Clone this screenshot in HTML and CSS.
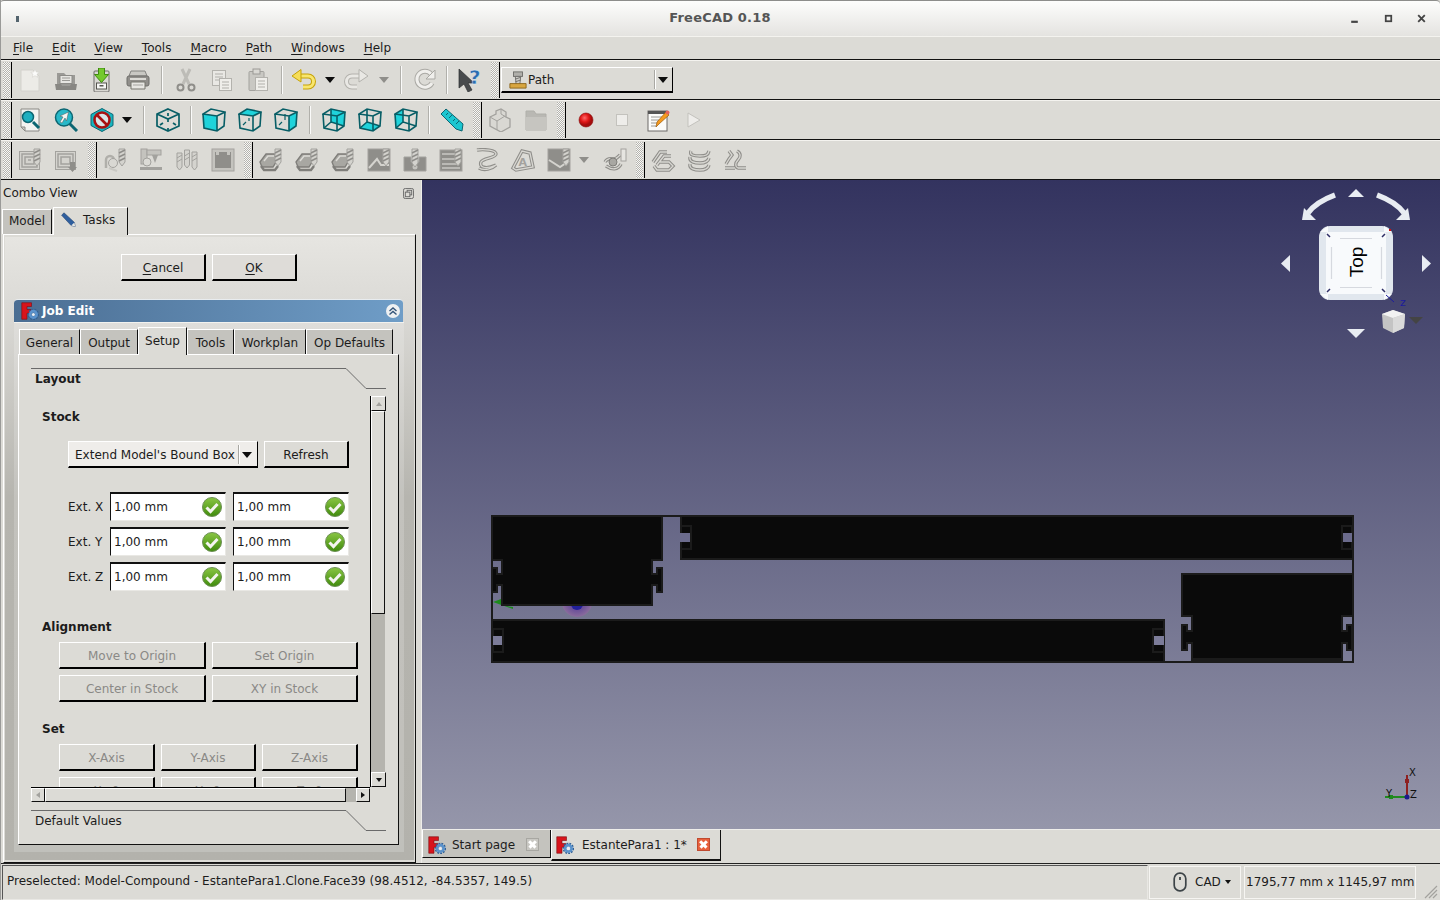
FILE: index.html
```html
<!DOCTYPE html>
<html lang="en">
<head>
<meta charset="utf-8">
<title>FreeCAD 0.18</title>
<link rel="stylesheet" href="styles.css">
</head>
<body>
<svg class="defs" aria-hidden="true">
<defs>
<linearGradient id="gc" x1="0" y1="0" x2="0" y2="1"><stop offset="0" stop-color="#8ac644"/><stop offset="1" stop-color="#3f8a0c"/></linearGradient>
<radialGradient id="gr" cx=".4" cy=".35"><stop offset="0" stop-color="#ff6a6a"/><stop offset=".6" stop-color="#e01616"/><stop offset="1" stop-color="#a50c0c"/></radialGradient>
<radialGradient id="gorg"><stop offset="0" stop-color="#52369a"/><stop offset=".6" stop-color="#70549a"/><stop offset="1" stop-color="#8a6c9c"/></radialGradient>
<path id="p-helix" d="M2 2c7-1 19 0 19 4s-13 4-15 8c-2 5 4 8 15 3M4 20c5 3 13 1 17-3"/>
<path id="p-engr" d="M2 20L11 3l8 2 3 14-17 3z"/>
<path id="p-comp" d="M2 14L9 4h7M6 17l7-9h7M3 18l3 4h12l4-4-4-4H9"/>
<path id="p-lay" d="M4 3c-2 4 3 5 9 5s8-1 9-5M3 9c-1 5 5 6 10 6s8-1 9-5M3 16c-1 5 5 6 10 6s8-1 9-5"/>
<path id="p-sim" d="M14 3c4 2 4 6 1 9s-3 7 0 8h8M6 3l3 4-3 4-3 5M2 20h10"/>
<path id="p-dress" d="M2 14c3-5 7-3 9-3s3-1 6-4M3 18c6 4 12 4 15-2"/>
<symbol id="bit" viewBox="0 0 24 24"><path d="M16 1h6v13l-3 4-3-4z" fill="#d4d3ce" stroke="#a3a29e"/><path d="M16 5l6-3M16 9l6-3M16 13l6-3" stroke="#8f8e8a" stroke-width="1.600" fill="none"/></symbol>
<symbol id="new" viewBox="0 0 24 24"><path d="M3 2h12l6 6v15H3z" fill="#ecebe7" stroke="#d3d2cd"/><path d="M17 1l1.300 3 3 .3-2.300 2 .7 3-2.700-1.600-2.700 1.600.7-3-2.300-2 3-.3z" fill="#fbfbfa" stroke="#d5d4cf" stroke-width=".6"/></symbol>
<symbol id="open" viewBox="0 0 24 24"><path d="M3 5h7l2 2h9v11H3z" fill="#9b9a96"/><rect x="6" y="7.500" width="12" height="8" fill="#e6e5e1" stroke="#8c8b87"/><path d="M8 10h8M8 12.500h8" stroke="#9b9a96"/><path d="M1 16h6l1 2h8l1-2h6l-1 6H2z" fill="#888783"/></symbol>
<symbol id="save" viewBox="0 0 24 24"><rect x="4" y="3" width="15" height="21" rx="1" fill="#d9d8d3" stroke="#6c6b68"/><rect x="6.500" y="15" width="10" height="6" fill="#f6f6f4" stroke="#55544f"/><rect x="9.500" y="17" width="4" height="1.500" fill="#55544f"/><path d="M8.500 0h6v6.500h4l-7 8-7-8h4z" fill="#74c92e" stroke="#3f8a10"/></symbol>
<symbol id="print" viewBox="0 0 24 24"><path d="M5 3h14l2 5H3z" fill="#c9c8c3" stroke="#848380"/><rect x="1" y="8" width="22" height="10" rx="2" fill="#918f8b" stroke="#6f6e6a"/><rect x="4" y="10" width="16" height="2" fill="#dcdbd6"/><path d="M5 14h14v7H5z" fill="#e7e6e2" stroke="#77766f"/><path d="M7 17h10" stroke="#a5a4a0"/></symbol>
<symbol id="cut" viewBox="0 0 24 24"><path d="M9 16L16 1M15 16L8 1" stroke="#bdbcb7" stroke-width="3" fill="none"/><circle cx="6.500" cy="19.500" r="3" fill="none" stroke="#8f8e8a" stroke-width="2"/><circle cx="17.500" cy="19.500" r="3" fill="none" stroke="#8f8e8a" stroke-width="2"/></symbol>
<symbol id="copy" viewBox="0 0 24 24"><rect x="2.500" y="2.500" width="13" height="15" fill="#e9e8e4" stroke="#b3b2ad"/><path d="M5 6h8M5 9h8M5 12h5" stroke="#b0afaa"/><rect x="9.500" y="10.500" width="12" height="12" fill="#efeeea" stroke="#b3b2ad"/><path d="M12 14h7M12 17h7M12 20h7" stroke="#b0afaa"/></symbol>
<symbol id="paste" viewBox="0 0 24 24"><rect x="3" y="3.500" width="15" height="19" rx="1" fill="#c9c8c3" stroke="#a3a29e"/><rect x="7" y="1" width="7" height="5" fill="#d9d8d3" stroke="#9b9a96"/><rect x="9.500" y="9.500" width="12" height="13" fill="#efeeea" stroke="#b3b2ad"/><path d="M12 13h7M12 16h7M12 19h7" stroke="#b0afaa"/></symbol>
<symbol id="undo" viewBox="0 0 24 24"><path d="M9 8h8a5.500 5.500 0 0 1 0 11h-5" fill="none" stroke="#c6a208" stroke-width="5"/><path d="M9 8h8a5.500 5.500 0 0 1 0 11h-5" fill="none" stroke="#f8e66e" stroke-width="3"/><path d="M1 8l9-6.500V14z" fill="#f6de58" stroke="#c6a208"/></symbol>
<symbol id="redo" viewBox="0 0 24 24"><path d="M15 8H7a5.500 5.500 0 0 0 0 11h5" fill="none" stroke="#b3b2ad" stroke-width="5"/><path d="M15 8H7a5.500 5.500 0 0 0 0 11h5" fill="none" stroke="#e9e8e4" stroke-width="3"/><path d="M23 8l-9-6.500V14z" fill="#e9e8e4" stroke="#b3b2ad"/></symbol>
<symbol id="refresh" viewBox="0 0 24 24"><path d="M19 15a8 8 0 1 1-1-9" fill="none" stroke="#aaa9a4" stroke-width="5"/><path d="M19 15a8 8 0 1 1-1-9" fill="none" stroke="#f0efec" stroke-width="3"/><path d="M22 2v9h-9z" fill="#f0efec" stroke="#aaa9a4"/></symbol>
<symbol id="help" viewBox="0 0 24 24"><path d="M1 1v19l5-4 4 8 4-2-4-7h6z" fill="#484b4d" stroke="#2f3132" stroke-width=".7"/><text x="11" y="16" class="ictext qm">?</text></symbol>
<symbol id="fitall" viewBox="0 0 24 24"><path d="M3 1h18v22H7l-4-4z" fill="#f3f3f1" stroke="#8a8985"/><path d="M3 19h4v4z" fill="#cfcec9" stroke="#8a8985"/><path d="M15 14l6 6" stroke="#0c6672" stroke-width="3"/><circle cx="10" cy="9" r="5.500" fill="#20afc0" stroke="#0c6672" stroke-width="1.500"/></symbol>
<symbol id="fitsel" viewBox="0 0 24 24"><path d="M15 15l8 8" stroke="#0c6672" stroke-width="3"/><circle cx="10" cy="9.500" r="8.500" fill="#28b8c8" stroke="#0c6672" stroke-width="1.500"/><path d="M14.500 4L6 8l3 1-3 5 2 1 3-5 1.500 3z" fill="#f4f4f2" stroke="#555" stroke-width=".5"/></symbol>
<symbol id="style" viewBox="0 0 24 24"><path d="M12 .5l11 6v11l-11 6-11-6v-11z" fill="#17b5c0" stroke="#0c6672"/><circle cx="12" cy="12" r="7.500" fill="#d9e6e8" stroke="#a81212" stroke-width="2.600"/><path d="M7 7l10 10" stroke="#a81212" stroke-width="2.600"/></symbol>
<symbol id="wire" viewBox="0 0 24 24"><path d="M1 6l14 2 8-4-14-3zM1 6l1 14 13 3 7-5 1-14M15 8v15" fill="none" stroke="#075e66" stroke-width="1.600"/></symbol>
<symbol id="wireb" viewBox="0 0 24 24"><path d="M9 1v13l13 4M9 14l-7 6" fill="none" stroke="#075e66" stroke-width="1.600"/></symbol>
<symbol id="axo" viewBox="0 0 24 24"><path d="M12 1l11 5v12l-11 5-11-5V6zM1 6l11 5 11-5M12 11v3M12 20v3" fill="none" stroke="#075e66" stroke-width="1.700"/><path d="M4 17l3-2M20 17l-3-2M12 8V5" stroke="#075e66" stroke-width="1.700"/></symbol>
<symbol id="vfront" viewBox="0 0 24 24"><path d="M1 6l14 2v15l-13-3z" fill="#1fd3db"/><use href="#wire"/></symbol>
<symbol id="vtop" viewBox="0 0 24 24"><path d="M1 6l14 2 8-4-14-3z" fill="#1fd3db"/><use href="#wire"/><path d="M5 17l3-3M11 10V13" stroke="#075e66" stroke-width="1.200"/></symbol>
<symbol id="vright" viewBox="0 0 24 24"><path d="M15 8l8-4-1 14-7 5z" fill="#1fd3db"/><use href="#wire"/><path d="M5 17l3-3M11 6v6" stroke="#075e66" stroke-width="1.200"/></symbol>
<symbol id="vrear" viewBox="0 0 24 24"><path d="M9 1l14 3-1 14-13-4z" fill="#1fd3db"/><use href="#wire"/><use href="#wireb"/></symbol>
<symbol id="vbot" viewBox="0 0 24 24"><path d="M9 14l13 4-7 5-13-3z" fill="#1fd3db"/><use href="#wire"/><use href="#wireb"/></symbol>
<symbol id="vleft" viewBox="0 0 24 24"><path d="M1 6l8-5v13l-7 6z" fill="#1fd3db"/><use href="#wire"/><use href="#wireb"/></symbol>
<symbol id="rule" viewBox="0 0 24 24"><path d="M1 6l5-5 17 15-1 7-6-2z" fill="#1cc6d0" stroke="#0c6672"/><path d="M6 7l2-2M9 10l3-3M13 13l2-2M16 16l3-3" stroke="#0c6672"/></symbol>
<symbol id="part" viewBox="0 0 24 24"><path d="M2 9l6-3V3l5-2 5 3v5l4 2v8l-9 5-11-6z" fill="#d9d8d3" stroke="#a3a29e" stroke-width="1.300"/><path d="M2 9l7 4 8-5M9 13v9M13 1v5l5 3" fill="none" stroke="#a3a29e"/></symbol>
<symbol id="fold" viewBox="0 0 24 24"><path d="M2 3h8l2 3h10v16H2z" fill="#b9b8b3" stroke="#b0afaa"/><path d="M2 9h20v13H2z" fill="#c6c5c0"/></symbol>
<symbol id="rec" viewBox="0 0 24 24"><circle cx="12" cy="12" r="7" fill="url(#gr)" stroke="#8a0c0c" stroke-width=".6"/></symbol>
<symbol id="stop" viewBox="0 0 24 24"><rect x="6.500" y="6.500" width="11" height="11" fill="#eeedea" stroke="#c3c2bd"/></symbol>
<symbol id="macro" viewBox="0 0 24 24"><rect x="2" y="3" width="19" height="20" fill="#fbfbf9" stroke="#6c6b68"/><path d="M2 3h19v3H2z" fill="#555"/><path d="M5 9h11M5 12h8M5 15h6M5 18h5" stroke="#9a9a96"/><path d="M10 19l1-5L20 4l3 3-10 9z" fill="#f59b1f" stroke="#9b5a0c" stroke-width=".7"/><circle cx="21.500" cy="4.500" r="2" fill="#e4635c"/></symbol>
<symbol id="play" viewBox="0 0 24 24"><path d="M6 5l12 7-12 7z" fill="#eeedea" stroke="#c3c2bd"/></symbol>
<symbol id="contour" viewBox="0 0 24 24"><rect x="1.500" y="3.500" width="20" height="18" fill="#d4d3ce" stroke="#a3a29e"/><path d="M4 6h15v13H4zM7 9h9v7H7zM10 12h3" fill="none" stroke="#a3a29e" stroke-width="1.500"/><use href="#bit"/></symbol>
<symbol id="contour2" viewBox="0 0 24 24"><rect x="1.500" y="3.500" width="20" height="18" fill="#d4d3ce" stroke="#a3a29e"/><path d="M4 6h15v13H4zM7 9h9v7H7z" fill="none" stroke="#a3a29e" stroke-width="1.500"/><path d="M16 14h5v5h2l-4.500 5-4.500-5h2z" fill="#8f8e8a"/></symbol>
<symbol id="pin" viewBox="0 0 24 24"><path d="M3 20v-8a4 4 0 0 1 8 0" fill="none" stroke="#b0afaa" stroke-width="2.500"/><circle cx="10" cy="15" r="4.500" fill="#d9d8d3" stroke="#a3a29e"/><path d="M6 20l8 3" stroke="#c9c8c3" stroke-width="2"/><use href="#bit"/></symbol>
<symbol id="mach" viewBox="0 0 24 24"><rect x="2" y="1" width="6" height="15" fill="#c4c3be" stroke="#a3a29e"/><rect x="8" y="2" width="14" height="5" fill="#c4c3be" stroke="#a3a29e"/><path d="M13 7h6l-3 8z" fill="#a3a29e"/><circle cx="8" cy="14" r="4" fill="#dcdbd6" stroke="#a3a29e"/><rect x="1" y="19" width="22" height="3" fill="#a3a29e"/></symbol>
<symbol id="bits" viewBox="0 0 24 24"><g fill="#d4d3ce" stroke="#a3a29e"><path d="M2 5h5v14l-2.500 3L2 19z"/><path d="M9.500 2h5v15l-2.500 3-2.500-3z"/><path d="M17 4h5v15l-2.500 3-2.500-3z"/></g><path d="M2 10l5-3M2 14l5-3M9.500 8l5-3M9.500 12l5-3M17 9l5-3M17 13l5-3" stroke="#a3a29e" fill="none"/></symbol>
<symbol id="stock" viewBox="0 0 24 24"><rect x="1" y="1" width="22" height="22" fill="#c4c3be" stroke="#a3a29e"/><rect x="4" y="4" width="16" height="16" fill="#8f8e8a"/><rect x="5" y="4" width="3" height="3" fill="#c4c3be"/><rect x="16" y="4" width="3" height="3" fill="#c4c3be"/></symbol>
<symbol id="stack" viewBox="0 0 24 24"><path d="M1 14l6-8h10v8l-3 5H3z" fill="#a8a7a2" stroke="#7f7e7a" stroke-width="1.300"/><path d="M2 18l3 4h11l3-4" fill="none" stroke="#7f7e7a" stroke-width="2.400"/><path d="M5 13l4-5h6" fill="none" stroke="#dcdbd6" stroke-width="1.500"/><use href="#bit"/></symbol>
<symbol id="pocket" viewBox="0 0 24 24"><rect x="1" y="1" width="22" height="22" fill="#8f8e8a" stroke="#a3a29e"/><path d="M2 20l8-9 4 6h8" fill="none" stroke="#d4d3ce" stroke-width="2"/><use href="#bit"/></symbol>
<symbol id="drill" viewBox="0 0 24 24"><path d="M1 9h7v5h8V9h7v14H1z" fill="#8f8e8a" stroke="#a3a29e"/><circle cx="12" cy="19" r="2.500" fill="#c4c3be"/><path d="M9 1h6v14l-3 4-3-4z" fill="#d4d3ce" stroke="#a3a29e"/><path d="M9 5l6-3M9 9l6-3M9 13l6-3" stroke="#8f8e8a" stroke-width="1.500"/></symbol>
<symbol id="face" viewBox="0 0 24 24"><rect x="1" y="2" width="22" height="21" fill="#8f8e8a" stroke="#a3a29e"/><path d="M3 6h15M3 11h15M3 16h15M3 20h18" stroke="#c9c8c3" stroke-width="1.500"/><use href="#bit"/></symbol>
<symbol id="helix" viewBox="0 0 24 24"><use href="#p-helix" class="t1"/><use href="#p-helix" class="t2"/></symbol>
<symbol id="engr" viewBox="0 0 24 24"><use href="#p-engr" class="t1"/><use href="#p-engr" class="t2"/><text x="7.500" y="18" class="ictext eng">A</text></symbol>
<symbol id="pocket3" viewBox="0 0 24 24"><rect x="1" y="1" width="22" height="22" fill="#8f8e8a" stroke="#a3a29e"/><path d="M2 12l11 7 9-6" fill="none" stroke="#d4d3ce" stroke-width="2"/><use href="#bit"/></symbol>
<symbol id="dress" viewBox="0 0 24 24"><use href="#p-dress" class="t1"/><use href="#p-dress" class="t2"/><circle cx="10" cy="14" r="4" fill="#a8a7a2" stroke="#7f7e7a"/><rect x="18" y="1" width="5" height="12" fill="#e6e5e1" stroke="#a3a29e"/></symbol>
<symbol id="comp" viewBox="0 0 24 24"><use href="#p-comp" class="t1"/><use href="#p-comp" class="t2"/></symbol>
<symbol id="lay" viewBox="0 0 24 24"><use href="#p-lay" class="t1"/><use href="#p-lay" class="t2"/></symbol>
<symbol id="sim" viewBox="0 0 24 24"><use href="#p-sim" class="t1"/><use href="#p-sim" class="t2"/></symbol>
<symbol id="fc" viewBox="0 0 24 24"><path d="M1 1h13v5H8v4h5v5H8v8H1z" fill="#d8141c" stroke="#7a0c10" stroke-width=".8"/><circle cx="16.500" cy="16.500" r="6.500" fill="none" stroke="#2f5f96" stroke-width="2.200" stroke-dasharray="2.400 1.500"/><circle cx="16.500" cy="16.500" r="4.300" fill="none" stroke="#5a92cc" stroke-width="3.600"/><circle cx="16.500" cy="16.500" r="2" fill="#e8eef5"/></symbol>
<symbol id="check" viewBox="0 0 20 20"><circle cx="10" cy="10" r="9.500" fill="url(#gc)" stroke="#6d8f55"/><path d="M4.500 10.500l4 4 7-7.500" fill="none" stroke="#f4f4f0" stroke-width="3"/></symbol>
<symbol id="pencil" viewBox="0 0 20 20"><path d="M2 4l3-3 13 12 1 5-5-1z" fill="#2f5f9e" stroke="#1c3d6c" stroke-width=".7"/><path d="M14 17l4-4 1 5z" fill="#e8e8e4"/></symbol>
<symbol id="mouse" viewBox="0 0 14 20"><rect x="1.200" y="1.200" width="11.600" height="17.600" rx="5.500" fill="none" stroke="#3d4448" stroke-width="1.700"/><path d="M7 5v3" stroke="#3d4448" stroke-width="1.800"/></symbol>
<symbol id="pathwb" viewBox="0 0 20 20"><rect x="5" y="1" width="10" height="5" fill="#b0afaa" stroke="#6c6b68"/><path d="M7 6h6l-1 9H8z" fill="#cfcec9" stroke="#6c6b68"/><path d="M7 9l6-2M7 12l6-2" stroke="#6c6b68"/><path d="M1 14h18v5H1z" fill="#d8a640" stroke="#8a6418"/></symbol>
</defs>
</svg>

<div class="win">
  <header class="title">
    <span class="wicon"></span>
    <span class="wname">FreeCAD 0.18</span>
    <span class="wbtns">
      <svg class="wb" viewBox="0 0 10 10"><path d="M2 8h6" stroke="#444" stroke-width="2"/></svg>
      <svg class="wb" viewBox="0 0 10 10"><rect x="2.500" y="2.500" width="5" height="5" fill="none" stroke="#444" stroke-width="1.600"/></svg>
      <svg class="wb" viewBox="0 0 10 10"><path d="M2 2l6 6M8 2l-6 6" stroke="#444" stroke-width="1.700"/></svg>
    </span>
  </header>

  <nav class="menu">
    <span><u>F</u>ile</span><span><u>E</u>dit</span><span><u>V</u>iew</span><span><u>T</u>ools</span><span><u>M</u>acro</span><span><u>P</u>ath</span><span><u>W</u>indows</span><span><u>H</u>elp</span>
  </nav>

  <div class="tbar">
    <i class="handle"></i>
    <svg class="ic"><use href="#new"/></svg><svg class="ic"><use href="#open"/></svg><svg class="ic"><use href="#save"/></svg><svg class="ic"><use href="#print"/></svg>
    <i class="sep"></i>
    <svg class="ic"><use href="#cut"/></svg><svg class="ic"><use href="#copy"/></svg><svg class="ic"><use href="#paste"/></svg>
    <i class="sep"></i>
    <svg class="ic w30"><use href="#undo"/></svg><i class="drop w24"></i>
    <svg class="ic w30"><use href="#redo"/></svg><i class="drop w23 off"></i>
    <i class="sep"></i>
    <svg class="ic"><use href="#refresh"/></svg>
    <i class="sep w8"></i>
    <svg class="ic ml1"><use href="#help"/></svg>
    <i class="handle"></i>
    <div class="wbcombo"><svg class="wbicon"><use href="#pathwb"/></svg><span class="wbname">Path</span><i class="cdiv"></i><i class="carrow"></i></div>
  </div>

  <div class="tbar">
    <i class="handle"></i>
    <svg class="ic"><use href="#fitall"/></svg><svg class="ic"><use href="#fitsel"/></svg><svg class="ic"><use href="#style"/></svg><i class="drop w14 mr4"></i>
    <i class="sep"></i>
    <svg class="ic"><use href="#axo"/></svg>
    <i class="sep w10"></i>
    <svg class="ic"><use href="#vfront"/></svg><svg class="ic"><use href="#vtop"/></svg><svg class="ic"><use href="#vright"/></svg>
    <i class="sep"></i>
    <svg class="ic"><use href="#vrear"/></svg><svg class="ic"><use href="#vbot"/></svg><svg class="ic"><use href="#vleft"/></svg>
    <i class="sep w10"></i>
    <svg class="ic"><use href="#rule"/></svg>
    <i class="handle"></i>
    <svg class="ic"><use href="#part"/></svg><svg class="ic"><use href="#fold"/></svg>
    <i class="handle"></i>
    <svg class="ic ml2"><use href="#rec"/></svg><svg class="ic"><use href="#stop"/></svg><svg class="ic"><use href="#macro"/></svg><svg class="ic"><use href="#play"/></svg>
  </div>

  <div class="tbar">
    <i class="handle"></i>
    <svg class="ic"><use href="#contour"/></svg><svg class="ic"><use href="#contour2"/></svg>
    <i class="handle ml4"></i>
    <svg class="ic"><use href="#pin"/></svg><svg class="ic"><use href="#mach"/></svg><svg class="ic"><use href="#bits"/></svg><svg class="ic"><use href="#stock"/></svg>
    <i class="handle"></i>
    <svg class="ic"><use href="#stack"/></svg><svg class="ic"><use href="#stack"/></svg><svg class="ic"><use href="#stack"/></svg><svg class="ic"><use href="#pocket"/></svg><svg class="ic"><use href="#drill"/></svg><svg class="ic"><use href="#face"/></svg><svg class="ic"><use href="#helix"/></svg><svg class="ic"><use href="#engr"/></svg><svg class="ic"><use href="#pocket3"/></svg><i class="drop w14 mr6 off"></i><svg class="ic"><use href="#dress"/></svg>
    <i class="handle"></i>
    <svg class="ic"><use href="#comp"/></svg><svg class="ic"><use href="#lay"/></svg><svg class="ic"><use href="#sim"/></svg>
  </div>

  <main class="main">
    <aside class="dock">
      <div class="dockhead"><span>Combo View</span><svg class="floatic" viewBox="0 0 12 12"><rect x=".5" y=".5" width="11" height="11" rx="2" fill="none" stroke="#666"/><rect x="4.500" y="2.500" width="5" height="5" fill="none" stroke="#666"/><rect x="2.500" y="4.500" width="5" height="5" fill="#dcdbd6" stroke="#666"/></svg></div>
      <div class="docktabs">
        <span class="dtab">Model</span>
        <span class="dtab on"><svg class="pen"><use href="#pencil"/></svg>Tasks</span>
      </div>
      <div class="pane">
        <div class="taskbg">
          <div class="dlgbtns">
            <button class="btn dlg" type="button"><u>C</u>ancel</button>
            <button class="btn dlg" type="button"><u>O</u>K</button>
          </div>
          <section class="box">
            <div class="boxhead">
              <svg class="fclogo"><use href="#fc"/></svg>
              <span class="boxtitle">Job Edit</span>
              <svg class="collapse" viewBox="0 0 14 14"><circle cx="7" cy="7" r="7" fill="#eef0f2"/><path d="M3.500 7l3.500-3 3.500 3M3.500 10.500l3.500-3 3.500 3" fill="none" stroke="#34557a" stroke-width="1.400"/></svg>
            </div>
            <div class="boxbody">
              <div class="tabs">
                <span class="tab">General</span><span class="tab">Output</span><span class="tab on">Setup</span><span class="tab">Tools</span><span class="tab">Workplan</span><span class="tab">Op Defaults</span>
              </div>
              <div class="tabpane">
                <div class="tbh first">
                  <svg class="tbline" viewBox="0 0 355 22"><path d="M0 .5H315L335 20.500H355" fill="none" stroke="#6a6a6a"/></svg>
                  <b>Layout</b>
                </div>
                <div class="sarea">
                  <div class="scontent">
                    <h4 class="h1st">Stock</h4>
                    <div class="stockrow">
                      <div class="combo"><span>Extend Model's Bound Box</span><i class="cdiv"></i><i class="carrow"></i></div>
                      <button class="btn ref" type="button">Refresh</button>
                    </div>
                    <div class="extgrid">
                      <label>Ext. X</label><div class="inp">1,00 mm<svg class="ok"><use href="#check"/></svg></div><div class="inp two">1,00 mm<svg class="ok"><use href="#check"/></svg></div>
                      <label>Ext. Y</label><div class="inp">1,00 mm<svg class="ok"><use href="#check"/></svg></div><div class="inp two">1,00 mm<svg class="ok"><use href="#check"/></svg></div>
                      <label>Ext. Z</label><div class="inp">1,00 mm<svg class="ok"><use href="#check"/></svg></div><div class="inp two">1,00 mm<svg class="ok"><use href="#check"/></svg></div>
                    </div>
                    <h4 class="h2nd">Alignment</h4>
                    <div class="g2">
                      <button class="btn dis" type="button">Move to Origin</button><button class="btn dis" type="button">Set Origin</button>
                      <button class="btn dis" type="button">Center in Stock</button><button class="btn dis" type="button">XY in Stock</button>
                    </div>
                    <h4 class="h3rd">Set</h4>
                    <div class="g3">
                      <button class="btn dis" type="button">X-Axis</button><button class="btn dis" type="button">Y-Axis</button><button class="btn dis" type="button">Z-Axis</button>
                      <button class="btn dis" type="button">X=0</button><button class="btn dis" type="button">Y=0</button><button class="btn dis" type="button">Z=0</button>
                    </div>
                  </div>
                  <div class="vsb">
                    <i class="sbb"><i class="tri up"></i></i>
                    <i class="vthumb"></i>
                    <i class="strough"></i>
                    <i class="sbb"><i class="tri dn"></i></i>
                  </div>
                  <div class="hsb">
                    <i class="sbb"><i class="tri lf"></i></i>
                    <i class="hthumb"></i>
                    <i class="strough"></i>
                    <i class="sbb"><i class="tri rt"></i></i>
                  </div>
                </div>
                <div class="tbh second">
                  <svg class="tbline" viewBox="0 0 355 22"><path d="M0 .5H315L335 20.500H355" fill="none" stroke="#6a6a6a"/></svg>
                  <span>Default Values</span>
                </div>
              </div>
            </div>
          </section>
        </div>
      </div>
    </aside>

    <div class="center">
      <div class="view">
        <svg class="scene" viewBox="422 180 1018 649">
          <circle cx="577" cy="602" r="15" fill="url(#gorg)"/>
          <circle cx="577" cy="604" r="6" fill="#22209a"/>
          <path d="M493 602l8-3v6l12 2v2z" fill="#1c8a1c"/>
          <path d="M492 516H1353V662H492z" fill="none" stroke="#1b1b1b" stroke-width="2"/>
          <g fill="#0a0a0a" stroke="#1b1b1b" stroke-width="2">
            <path d="M492 516H662V560H652V574H657V568H662V592H657V585H652V605H502V585H497V592H492V568H497V574H502V560H492z"/>
            <path d="M681 516H1353V559H681z"/>
            <path d="M492 620H1164V636H1154V645H1164V662H492z"/>
            <path d="M1182 574H1353V616H1342V631H1347V625H1352V650H1347V643H1342V662H1192V643H1187V650H1182V625H1187V631H1192V616H1182z"/>
          </g>
          <path d="M1193 658H1341V661H1193z" fill="#1b1b1b"/>
          <g fill="#0a0a0a" stroke="#1b1b1b" stroke-width="2">
            <path d="M681 526H691V549H681z"/>
            <path d="M1352 526H1342V549H1352z"/>
            <path d="M493 629H503V652H493z"/>
            <path d="M1164 629H1153V652H1164z"/>
          </g>
          <g class="gap">
            <rect x="680" y="533" width="10" height="9"/>
            <rect x="1343" y="533" width="9" height="9"/>
          </g>
          <g class="gap2">
            <rect x="493" y="636" width="9" height="9"/>
            <rect x="1154" y="636" width="10" height="9"/>
          </g>
          <g fill="#e8ecf2">
            <path d="M1335 195Q1316 202 1308 213" fill="none" stroke="#e8ecf2" stroke-width="5.500"/>
            <path d="M1377 195Q1396 202 1404 213" fill="none" stroke="#e8ecf2" stroke-width="5.500"/>
            <path d="M1302 220h14l-12-12z"/>
            <path d="M1410 220h-14l12-12z"/>
            <path d="M1348 197h16l-8-8z"/>
            <path d="M1347 329h18l-9 9z"/>
            <path d="M1290 255v17l-9-8.500z"/>
            <path d="M1422 255v17l9-8.500z"/>
          </g>
          <rect x="1319" y="226" width="74" height="74" rx="11" fill="#e1e7ee"/>
          <rect x="1326" y="232" width="60" height="62" rx="2" fill="#f8fafc"/>
          <path d="M1320 232l8 0 0-6zM1392 232l-8 0 0-6zM1320 294h8v6zM1392 294h-8v6z" fill="#f8fafc"/>
          <path d="M1340 238.500h32M1340 287.500h32M1331.500 247v32M1381.500 247v32" stroke="#d6d9df" stroke-width="1.200"/>
          <path d="M1327 234l3 3M1385 234l-3 3M1327 292l3-3M1385 292l-3-3" stroke="#2e2e66" stroke-width="1.500"/>
          <rect x="1389" y="229" width="2" height="2" fill="#d01010"/>
          <text class="toplab" transform="translate(1363 262) rotate(-90)" text-anchor="middle">Top</text>
          <path d="M1386 295l8 7" stroke="#1c1c9c"/>
          <text x="1400" y="306" class="zlab">z</text>
          <path d="M1393 310l12 4-1 14-11 5-10-5-1-14z" fill="#c4c4c4"/>
          <path d="M1393 310l12 4-12 4-11-4z" fill="#f2f2f2"/>
          <path d="M1393 318l12-4-1 14-11 5z" fill="#dadada"/>
          <path d="M1409 317h14l-7 7z" fill="#444"/>
          <path d="M1407 775v22" stroke="#8e2020" stroke-width="2"/>
          <path d="M1385 797h22" stroke="#1f8a1f" stroke-width="2"/>
          <rect x="1405" y="779" width="4" height="4" fill="#8e2020"/>
          <rect x="1389" y="795" width="4" height="4" fill="#1f8a1f"/>
          <circle cx="1407" cy="797" r="2.500" fill="#1c1c8c"/>
          <text x="1409" y="776" class="axlab">X</text>
          <text x="1386" y="797" class="axlab">Y</text>
          <text x="1410" y="798" class="axlab">Z</text>
        </svg>
      </div>
      <div class="doctabs">
        <span class="dt"><svg class="fclogo"><use href="#fc"/></svg><span class="dtname">Start page</span><i class="x"></i></span>
        <span class="dt on"><svg class="fclogo"><use href="#fc"/></svg><span class="dtname">EstantePara1 : 1*</span><i class="x red"></i></span>
      </div>
    </div>
  </main>

  <footer class="status">
    <div class="msg">Preselected: Model-Compound - EstantePara1.Clone.Face39 (98.4512, -84.5357, 149.5)</div>
    <div class="cell cad"><svg class="mouse"><use href="#mouse"/></svg>CAD<i class="tinydrop"></i></div>
    <div class="cell dim">1795,77 mm x 1145,97 mm</div>
    <svg class="grip" viewBox="0 0 14 14"><path d="M1 13L13 1M5 13l8-8M9 13l4-4" stroke="#a3a29e" stroke-width="1.200"/></svg>
  </footer>
</div>
</body>
</html>
```

FILE: styles.css
```css
* { box-sizing: border-box; }
html, body { margin: 0; height: 100%; overflow: hidden; }
body { font: 12px/16px "DejaVu Sans", sans-serif; color: #1c1c1c; background: #dcdbd6; }
.defs { position: absolute; width: 0; height: 0; }
.ictext { font-family: "DejaVu Sans", sans-serif; font-weight: 700; }
.qm { font-size: 20px; fill: #2a6cb0; stroke: #e8eef5; stroke-width: .4px; }
.eng { font-size: 11px; fill: #a3a29e; }
.t1, .t2 { fill: none; }
.t1 { stroke: #8f8e8a; stroke-width: 3.400px; }
.t2 { stroke: #d8d7d2; stroke-width: 1.300px; }
i { display: block; font-style: normal; }

.win { width: 1440px; height: 900px; display: flex; flex-direction: column; border-left: 1px solid #9a9a98; overflow: hidden; }

.title { height: 36px; flex: none; display: flex; align-items: center; position: relative; margin-left: -1px; border-top: 1px solid #8d8d8b; border-radius: 4px 4px 0 0; background: linear-gradient(#fdfdfc, #e4e3e0); }
.wicon { width: 3px; height: 6px; margin-left: 16px; background: #54646e; }
.wname { position: absolute; left: 0; right: 0; text-align: center; font-size: 13px; font-weight: 700; color: #555; letter-spacing: .2px; padding-bottom: 2px; }
.wbtns { margin-left: auto; display: flex; gap: 22.500px; padding-right: 13px; position: relative; }
.wb { width: 11px; height: 11px; }

.menu { height: 24px; flex: none; display: flex; align-items: center; gap: 19px; padding-left: 12px; border-bottom: 1px solid #111; border-top: 1px solid #f4f3ef; }

.tbar { height: 40px; flex: none; display: flex; align-items: center; border-top: 1px solid #f4f3ef; border-bottom: 1px solid #111; }
.handle { width: 9px; height: 36px; margin-left: 3px; flex: none; border-right: 1px solid #000; background: repeating-conic-gradient(#f7f7f5 0 25%, #b4b3ae 0 50%) 0 0 / 2px 2px; background-clip: content-box; padding-right: 1px; }
.tbar > .handle:first-child { margin-left: 2px; }
.ml4 { margin-left: 4px; }
.ml1 { margin-left: 1px; }
.ml2 { margin-left: 2px; }
.ic { width: 36px; height: 24px; flex: none; }
.w30 { width: 30px; }
.sep { width: 12px; height: 28px; flex: none; background: linear-gradient(#b1b0ab, #b1b0ab) 5px 0 / 1px 100% no-repeat, linear-gradient(#fbfbfa, #fbfbfa) 6px 0 / 1px 100% no-repeat; }
.sep.w8 { width: 8px; background-position: 3px 0, 4px 0; }
.sep.w10 { width: 10px; background-position: 4px 0, 5px 0; }
.drop { height: 24px; flex: none; position: relative; }
.drop::after { content: ""; position: absolute; left: 50%; top: 9px; margin-left: -5px; border: 5px solid transparent; border-top: 6px solid #0c0c0c; border-bottom: 0; }
.drop.off::after { border-top-color: #8f8e8a; }
.w14 { width: 14px; }
.w23 { width: 23px; }
.w24 { width: 24px; }
.mr4 { margin-right: 4px; }
.mr6 { margin-right: 6px; }

.wbcombo { width: 172px; height: 26px; margin-left: 1px; flex: none; display: flex; align-items: center; padding: 0 0 0 7px; border: 1px solid; border-color: #fff #000 #000 #fff; border-bottom-width: 2px; }
.wbicon { width: 18px; height: 18px; }
.wbname { margin-left: 1px; flex: 1; padding-top: 1px; }
.cdiv { width: 1px; height: 19px; background: #a9a8a3; box-shadow: 1px 0 #fff; }
.carrow { width: 17px; height: 6px; position: relative; }
.carrow::after { content: ""; position: absolute; left: 3px; top: 0; border: 5px solid transparent; border-top: 6px solid #0c0c0c; border-bottom: 0; }

.main { flex: 1; min-height: 0; display: flex; }
.dock { width: 420px; flex: none; display: flex; flex-direction: column; }
.dockhead { height: 26px; flex: none; display: flex; align-items: center; justify-content: space-between; padding: 0 7px 0 2px; }
.floatic { width: 11px; height: 11px; }
.docktabs { height: 28px; flex: none; display: flex; align-items: flex-end; padding-left: 1px; }
.dtab { height: 25px; width: 50px; display: flex; align-items: center; justify-content: center; padding-bottom: 2px; background: #c4c3be; border-top: 1px solid #fff; border-left: 1px solid #fff; border-right: 1px solid #111; }
.dtab.on { height: 28px; width: 75px; background: #dcdbd6; margin-left: 1px; margin-bottom: -1px; position: relative; padding: 0 0 3px 6px; justify-content: flex-start; z-index: 1; }
.pen { width: 16px; height: 16px; margin-right: 7px; flex: none; }

.pane { width: 413px; height: 629px; flex: none; margin-left: 2px; border-top: 1px solid #fff; border-left: 1px solid #fff; border-right: 1px solid #111; border-bottom: 1px solid #111; padding: 2px 1px 2px 1px; }
.taskbg { height: 100%; background: linear-gradient(#e6e5e1 0, #dbdad6 70px, #b6b5af 260px, #b3b2ac 100%); display: flex; flex-direction: column; }
.dlgbtns { display: flex; justify-content: center; gap: 6px; padding-top: 17px; margin-left: -1px; flex: none; }
.btn { display: block; padding: 2px 0 0; height: 27px; font: inherit; color: inherit; background: #dcdbd6; border: 1px solid; border-color: #fff #000 #000 #fff; border-bottom-width: 2px; border-right-width: 2px; overflow: hidden; white-space: nowrap; }
.dlg { width: 85px; background: #dedcd8; }

.box { width: 390px; margin: 18px 0 8px 9px; flex: 1; min-height: 0; display: flex; flex-direction: column; }
.boxhead { height: 23px; flex: none; display: flex; align-items: center; margin-right: 1px; padding: 0 3px 0 7px; border-radius: 4px 4px 0 0; border-top: 1px solid #e8ecef; background: linear-gradient(90deg, #4b6e93, #6f9dc7); color: #fff; }
.fclogo { width: 18px; height: 18px; flex: none; }
.boxtitle { font-weight: 700; margin-left: 3px; flex: 1; }
.collapse { width: 14px; height: 14px; }
.boxbody { flex: 1; min-height: 0; padding: 4px 4px 5px 4px; background: rgba(255, 255, 255, .18); border-top: 1px solid #f2f2ef; }
.tabs { height: 28px; display: flex; align-items: flex-end; padding-left: 1px; position: relative; z-index: 1; margin-bottom: -1px; }
.tab { height: 25px; display: flex; align-items: center; justify-content: center; padding-top: 2px; background: #c4c3be; border-top: 1px solid #fff; border-left: 1px solid #fff; border-right: 1px solid #111; width: 61px; margin-bottom: 1px; }
.tab:nth-child(2) { width: 58px; }
.tab:nth-child(3) { width: 49px; height: 28px; background: #dcdbd6; margin-bottom: 0; padding: 0 0 1px; }
.tab:nth-child(4) { width: 47px; }
.tab:nth-child(5) { width: 72px; }
.tab:nth-child(6) { width: 87px; }
.tabpane { height: 491px; width: 381px; background: #dcdbd6; border: 1px solid; border-color: #fff #111 #111 #fff; padding-top: 13px; }

.tbh { position: relative; margin-left: 12px; width: 355px; height: 28px; padding: 3px 0 0 4px; }
.tbh.second { height: 22px; margin-top: 8px; }
.tbline { position: absolute; left: 0; top: 0; width: 355px; height: 22px; }
.tbh b { font-weight: 700; }

.sarea { width: 354px; height: 406px; margin-left: 12px; display: grid; grid-template: 391px 15px / 339px 15px; }
.scontent { overflow: hidden; height: 391px; }
h4 { margin: 0; font-size: 12px; line-height: 16px; font-weight: 700; padding: 1px 0 0 11px; height: 16px; }
.h1st { margin-top: 12px; }
.h2nd { margin-top: 27px; }
.h3rd { margin-top: 18px; }
.stockrow { display: flex; gap: 6px; margin: 17px 0 0 37px; }
.combo { width: 190px; height: 27px; flex: none; display: flex; align-items: center; padding: 1px 0 0 6px; background: #efedea; border: 1px solid; border-color: #fff #000 #000 #fff; border-bottom-width: 2px; }
.combo span { flex: 1; white-space: nowrap; }
.combo .carrow { width: 18px; }
.ref { width: 85px; }
.extgrid { display: grid; grid-template-columns: 42px 116px 123px; grid-auto-rows: 29px; row-gap: 6px; margin: 24px 0 0 37px; width: 281px; }
.extgrid label { line-height: 31px; }
.inp { position: relative; height: 29px; width: 116px; padding-left: 3px; line-height: 27px; background: #fff; border: 1px solid; border-color: #111 #e9e8e4 #e9e8e4 #111; border-top-width: 2px; }
.inp.two { margin-left: 7px; }
.ok { position: absolute; right: 3px; top: 3px; width: 20px; height: 20px; }
.g2, .g3 { display: grid; gap: 6px; margin: 8px 0 0 28px; width: 299px; }
.g2 { grid-template-columns: 147px 146px; }
.g3 { grid-template-columns: 96px 95px 96px; }
.dis { color: #8a8986; }

.vsb { display: flex; flex-direction: column; border-left: 1px solid #000; background: #b5b4ae; }
.hsb { display: flex; grid-column: 1; border-top: 1px solid #000; background: #b5b4ae; }
.sbb { width: 15px; height: 15px; flex: none; display: flex; align-items: center; justify-content: center; background: #dcdbd6; border: 1px solid; border-color: #fff #111 #111 #fff; }
.hsb .sbb { width: 14px; height: 14px; }
.strough { flex: 1; }
.vthumb { height: 203px; flex: none; background: #dcdbd6; border: 1px solid; border-color: #fff #111 #111 #fff; }
.hthumb { width: 301px; flex: none; background: #dcdbd6; border: 1px solid; border-color: #fff #111 #111 #fff; }
.tri { width: 0; height: 0; border: 3px solid transparent; }
.tri.up { border-bottom: 4px solid #a3a29e; border-top: 0; }
.tri.dn { border-top: 4px solid #111; border-bottom: 0; }
.tri.lf { border-right: 4px solid #a3a29e; border-left: 0; }
.tri.rt { border-left: 4px solid #111; border-right: 0; }

.center { flex: 1; min-width: 0; display: flex; flex-direction: column; border-left: 1px solid #eeedea; }
.view { height: 649px; flex: none; background: linear-gradient(#33335f, #9596aa); }
.scene { width: 1018px; height: 649px; display: block; }
.gap { fill: #6b6b8c; }
.gap2 { fill: #7c7c99; }
.toplab { font: 19px "Liberation Sans", sans-serif; fill: #000; }
.zlab { font: 11px "DejaVu Sans", sans-serif; fill: #1c1c9c; }
.axlab { font: 10px "DejaVu Sans", sans-serif; fill: #111; }

.doctabs { flex: 1; display: flex; align-items: flex-start; border-top: 1px solid #eeedea; }
.dt { display: flex; align-items: center; height: 28px; width: 129px; padding: 2px 11px 0 5px; background: #c4c3be; border: 1px solid; border-color: transparent #111 #111 #fff; border-top: 0; }
.dt.on { height: 31px; width: 170px; background: #dcdbd6; padding: 0 10px 0 4px; border-bottom-width: 2px; }
.dtname { flex: 1; margin-left: 6px; white-space: nowrap; }
.dt.on .dtname { margin-left: 8px; }
.x { width: 13px; height: 13px; position: relative; background: #c8c7c2; border: 1px solid #a8a7a2; }
.x::before, .x::after { content: ""; position: absolute; left: 1px; top: 4px; width: 9px; height: 2.500px; background: #fff; transform: rotate(45deg); }
.x::after { transform: rotate(-45deg); }
.x.red { background: #e8603c; border-color: #c04a30; }

.status { height: 37px; flex: none; display: flex; align-items: center; margin-left: -1px; border-top: 1px solid #222; position: relative; }
.msg { width: 1146px; height: 35px; margin-left: 2px; padding-left: 4px; line-height: 31px; border: 1px solid; border-color: #555 #e9e8e4 #e9e8e4 #555; white-space: nowrap; }
.cell { height: 33px; display: flex; align-items: center; border: 1px solid #f6f5f2; }
.cad { width: 92px; margin-left: 1px; padding-left: 23px; }
.mouse { width: 14px; height: 20px; margin-right: 8px; }
.tinydrop { margin-left: 4px; border: 3.500px solid transparent; border-top: 4px solid #111; border-bottom: 0; }
.dim { width: 172px; margin-left: 3px; padding-left: 1px; white-space: nowrap; }
.grip { width: 14px; height: 14px; position: absolute; right: 2px; bottom: 1px; }
u { text-decoration-thickness: 1px; text-underline-offset: 2px; }
```
